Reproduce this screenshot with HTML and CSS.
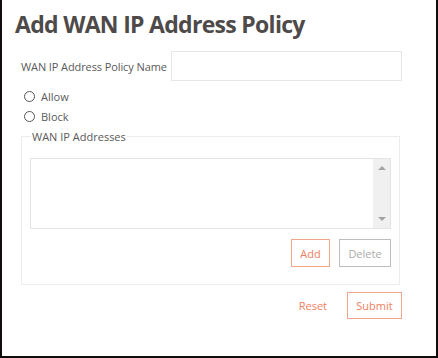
FILE: index.html
```html
<!DOCTYPE html>
<html lang="en">
<head>
    <meta charset="UTF-8">
    <meta name="viewport" content="width=device-width, initial-scale=1.0">
    <title>Add WAN IP Address Policy</title>
    <link rel="stylesheet" href="styles.css">
</head>
<body>
    <div class="panel">
        <h1>Add WAN IP Address Policy</h1>
        <div class="field-row">
            <label class="field-label" for="policy-name">WAN IP Address Policy Name</label>
            <input type="text" id="policy-name" class="text-input">
        </div>
        <div class="radio-group">
            <label class="radio-row"><span class="radio"></span>Allow</label>
            <label class="radio-row"><span class="radio"></span>Block</label>
        </div>
        <fieldset class="address-set">
            <legend>WAN IP Addresses</legend>
            <div class="listbox">
                <div class="listbox-items"></div>
                <div class="scrollbar">
                    <span class="arrow up"></span>
                    <span class="arrow down"></span>
                </div>
            </div>
            <div class="list-actions">
                <button class="btn btn-primary btn-add">Add</button>
                <button class="btn btn-disabled btn-delete">Delete</button>
            </div>
        </fieldset>
        <div class="form-actions">
            <button class="btn-link">Reset</button>
            <button class="btn btn-primary btn-submit">Submit</button>
        </div>
    </div>
</body>
</html>
```

FILE: styles.css
```css
body {
    margin: 0;
    padding: 0;
    font-family: "Open Sans", "Noto Sans", sans-serif;
    background: #fff;
}
.panel {
    width: 438px;
    height: 358px;
    box-sizing: border-box;
    border: 2px solid #110c0c;
    border-top: none;
    padding: 9px 0 0 13px;
}
h1 {
    margin: 0;
    font-size: 23px;
    line-height: 30px;
    font-weight: 700;
    letter-spacing: -0.7px;
    color: #4e4a4a;
}
.field-row {
    display: flex;
    align-items: center;
    margin-top: 12px;
    margin-left: 6px;
}
.field-label {
    flex-shrink: 0;
    white-space: nowrap;
    font-size: 11px;
    letter-spacing: -0.1px;
    color: #5a5a5a;
    width: 150px;
}
.text-input {
    width: 231px;
    height: 30px;
    box-sizing: border-box;
    border: 1px solid #e6e6e6;
    margin: 0;
    padding: 0 6px;
    outline: none;
}
.radio-group {
    margin-top: 5px;
    margin-left: 9px;
}
.radio-row {
    display: flex;
    align-items: center;
    height: 20px;
    font-size: 11px;
    color: #5a5a5a;
}
.radio {
    width: 11px;
    height: 11px;
    box-sizing: border-box;
    border: 1px solid #555;
    border-radius: 50%;
    margin-right: 6px;
}
.address-set {
    width: 379px;
    height: 156px;
    box-sizing: border-box;
    margin: 3px 0 0 6px;
    padding: 0 8px;
    border: 1px solid #ececec;
}
.address-set legend {
    font-size: 11px;
    color: #5a5a5a;
    padding: 0 1px;
    margin-left: 1px;
}
.listbox {
    display: flex;
    height: 69px;
    margin-top: 14px;
    border: 1px solid #e4e4e4;
}
.listbox-items {
    flex: 1;
}
.scrollbar {
    width: 17px;
    background: #f0f0f0;
    display: flex;
    flex-direction: column;
    justify-content: space-between;
    align-items: center;
    padding: 7px 0;
}
.arrow {
    width: 0;
    height: 0;
    border-left: 4px solid transparent;
    border-right: 4px solid transparent;
}
.arrow.up {
    border-bottom: 4px solid #a3a3a3;
}
.arrow.down {
    border-top: 4px solid #a3a3a3;
}
.list-actions {
    display: flex;
    justify-content: flex-end;
    gap: 9px;
    margin-top: 10px;
}
.btn {
    height: 28px;
    box-sizing: border-box;
    background: #fff;
    font-family: inherit;
    font-size: 11px;
    padding: 0;
    cursor: pointer;
}
.btn-primary {
    border: 1px solid #f3a58c;
    color: #f07e5e;
}
.btn-disabled {
    border: 1px solid #bdbdbd;
    color: #ababab;
}
.btn-add {
    width: 39px;
}
.btn-delete {
    width: 52px;
}
.form-actions {
    display: flex;
    justify-content: flex-end;
    align-items: center;
    gap: 20px;
    margin-top: 7px;
    width: 387px;
}
.btn-link {
    border: none;
    background: none;
    font-family: inherit;
    font-size: 11px;
    color: #f07e5e;
    padding: 0;
}
.btn-submit {
    width: 55px;
    height: 27px;
}
```
